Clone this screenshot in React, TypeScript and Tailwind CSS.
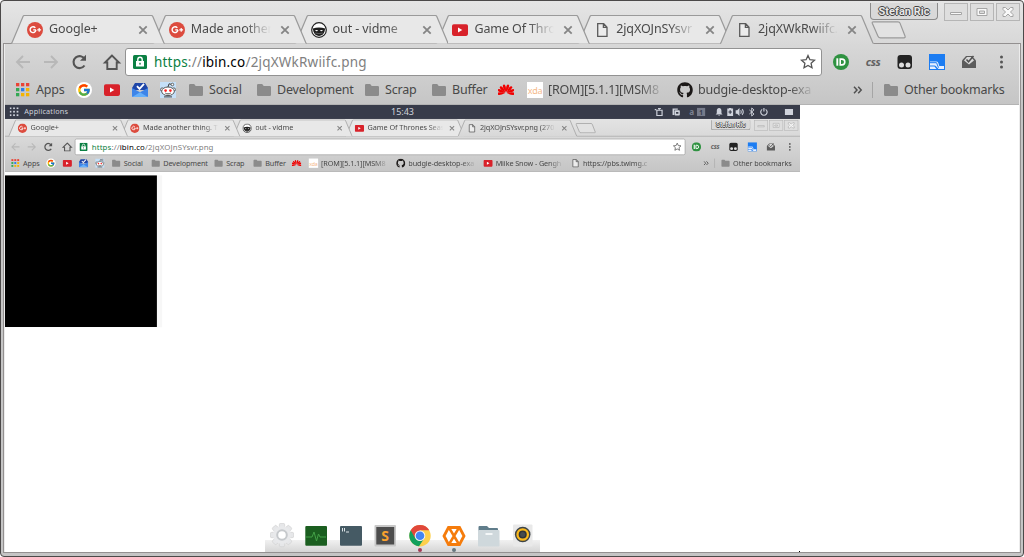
import React from 'react';
import { FaGithub } from 'react-icons/fa';
import { FcGoogle } from 'react-icons/fc';

type IconName =
  | 'gplus' | 'vidme' | 'youtube' | 'file' | 'apps' | 'google' | 'inbox'
  | 'reddit' | 'folder' | 'huawei' | 'xda' | 'github';

interface TabInfo {
  icon: IconName;
  title: string;
}

interface Bookmark {
  icon: IconName;
  label?: string;
  width: string;
}

const mainTabs: TabInfo[] = [
  { icon: 'gplus', title: 'Google+' },
  { icon: 'gplus', title: 'Made another' },
  { icon: 'vidme', title: 'out - vidme' },
  { icon: 'youtube', title: 'Game Of Thro' },
  { icon: 'file', title: '2jqXOJnSYsvr' },
  { icon: 'file', title: '2jqXWkRwiifc.' },
];

const innerTabs: TabInfo[] = [
  { icon: 'gplus', title: 'Google+' },
  { icon: 'gplus', title: 'Made another thing. Th' },
  { icon: 'vidme', title: 'out - vidme' },
  { icon: 'youtube', title: 'Game Of Thrones Seas' },
  { icon: 'file', title: '2jqXOJnSYsvr.png (270' },
];

const bookmarks: Bookmark[] = [
  { icon: 'apps', label: 'Apps', width: 'w-[61px]' },
  { icon: 'google', width: 'w-[28px]' },
  { icon: 'youtube', width: 'w-[28px]' },
  { icon: 'inbox', width: 'w-[28px]' },
  { icon: 'reddit', width: 'w-[28px]' },
  { icon: 'folder', label: 'Social', width: 'w-[68px]' },
  { icon: 'folder', label: 'Development', width: 'w-[108px]' },
  { icon: 'folder', label: 'Scrap', width: 'w-[67px]' },
  { icon: 'folder', label: 'Buffer', width: 'w-[67px]' },
  { icon: 'huawei', width: 'w-[29px]' },
  { icon: 'xda', label: '[ROM][5.1.1][MSM8', width: 'w-[150px]' },
  { icon: 'github', label: 'budgie-desktop-exa', width: 'w-[150px]' },
];

const innerBookmarks: Bookmark[] = [
  ...bookmarks,
  { icon: 'youtube', label: 'Miike Snow - Gengh', width: 'w-[150px]' },
  { icon: 'file', label: 'https://pbs.twimg.c', width: 'w-[150px]' },
];

const Icon = ({ name }: { name: IconName }) => {
  if (name === 'google') {
    return (
      <span className="flex h-4 w-4 shrink-0 items-center justify-center rounded-full bg-white">
        <FcGoogle size={14} />
      </span>
    );
  }
  if (name === 'github') return <FaGithub size={16} className="shrink-0 text-[#1b1817]" />;
  if (name === 'xda') {
    return (
      <span className="flex h-4 w-4 shrink-0 items-center justify-center bg-white text-[9px] leading-none tracking-[-0.3px] text-[#f5b98a]">
        xda
      </span>
    );
  }
  return (
    <svg width="16" height="16" viewBox="0 0 16 16" className="shrink-0">
      {name === 'gplus' && (
        <>
          <circle cx="8" cy="8" r="8" fill="#dc4b3e" />
          <path d="M9 7.900H6.200M8.300 5.900A2.900 2.900 0 1 0 8.900 7.900" fill="none" stroke="#fff" strokeWidth="1.400" />
          <path d="M12.200 6v3.800M10.300 7.900h3.800" stroke="#fff" strokeWidth="1.200" />
        </>
      )}
      {name === 'vidme' && (
        <>
          <circle cx="8" cy="8" r="7.300" fill="#fff" stroke="#222" strokeWidth="1.200" />
          <path d="M1.800 6.500q6.200-2.200 12.400 0l-.6 2.800Q12.300 13.800 8 14 3.700 13.800 2.400 9.300z" fill="#1e1e1e" />
          <path d="M4 8.300q1.700-.7 3.200.2-1.400 1.400-3.200-.2zM12 8.300q-1.700-.7-3.200.2 1.400 1.400 3.200-.2z" fill="#fff" />
          <path d="M4.200 11q3.800 1.300 7.600 0" fill="none" stroke="#777" strokeWidth=".7" />
        </>
      )}
      {name === 'youtube' && (
        <>
          <rect x="0" y="2.300" width="16" height="11.600" rx="1.800" fill="#d8222a" />
          <path d="M6 5.600v5l4.300-2.500z" fill="#fff" />
        </>
      )}
      {name === 'file' && (
        <path d="M3.700 1.700h6l3.300 3.500v9.200H3.700zM9.400 1.700v3.700H13" fill="#ececec" stroke="#5a5a5a" strokeWidth="1.300" />
      )}
      {name === 'apps' &&
        ['#ea4335', '#ea4335', '#ea4335', '#34a853', '#2b7de9', '#f4b400', '#34a853', '#f4b400', '#f4b400'].map((c, i) => (
          <rect key={i} x={1 + (i % 3) * 5} y={1 + Math.floor(i / 3) * 5} width="3.300" height="3.300" fill={c} />
        ))}
      {name === 'inbox' && (
        <>
          <path d="M0 6 3 1h10l3 5v2H0z" fill="#1f46a8" />
          <path d="m5 4.200 2.500 2.700L12 1.800" fill="none" stroke="#fff" strokeWidth="1.800" />
          <path d="M0 6l8 4.200L16 6v8.200q0 .8-.8.8H.8q-.8 0-.8-.8z" fill="#3f85e8" />
          <path d="M.3 15 8 10.200l7.700 4.800z" fill="#65b0fb" />
        </>
      )}
      {name === 'reddit' && (
        <>
          <rect width="16" height="16" fill="#c5e0f8" />
          <circle cx="2.200" cy="7.600" r="1.700" fill="#fff" stroke="#444" strokeWidth=".8" />
          <circle cx="13.800" cy="7.600" r="1.700" fill="#fff" stroke="#444" strokeWidth=".8" />
          <path d="M8 5 9 1.800l3 .7" fill="none" stroke="#444" />
          <circle cx="12.400" cy="2.500" r="1.300" fill="#fff" stroke="#444" strokeWidth=".8" />
          <ellipse cx="8" cy="9.300" rx="6.300" ry="4.300" fill="#fff" stroke="#444" strokeWidth=".9" />
          <circle cx="5.600" cy="8.600" r="1.300" fill="#f22" />
          <circle cx="10.400" cy="8.600" r="1.300" fill="#f22" />
          <path d="M5.300 11.100c1.500 1.100 3.900 1.100 5.400 0M4 14.900h8" fill="none" stroke="#444" />
        </>
      )}
      {name === 'folder' && (
        <path d="M1 3.300q0-1.300 1.200-1.300h4l1.500 2h6.100q1.200 0 1.200 1.200v7.600q0 1.200-1.200 1.200H2.200Q1 14 1 12.800z" fill="#8b8b8b" />
      )}
      {name === 'huawei' && (
        <g fill="#f00000">
          {[-95, -68, -42, -15, 15, 42, 68, 95].map((a) => (
            <path key={a} d="M8 10.800Q5.900 5.500 7 3.300q1-1.100 2 0 1.100 2.200-1 7.500z" transform={`rotate(${a} 8 11) translate(0 -.6)`} />
          ))}
        </g>
      )}
    </svg>
  );
};

// labels fade out where they run out of room
const fadeMask = '[mask-image:linear-gradient(to_right,#000_calc(100%-26px),transparent)]';

const Tab = ({ tab, wide, active, z }: { tab: TabInfo; wide?: boolean; active?: boolean; z: number }) => {
  const w = wide ? 193 : 141.8;
  const gradientId = `tab-${wide ? 'wide' : 'normal'}`;
  const shape = `M0 28.500C1 28.500 1 27.500 1.500 26.500L12 1.500Q12.400.5 13.500.5H${w - 1.5}Q${w - 0.4} .5 ${w} 1.500L${w + 10.5} 26.500Q${w + 11} 28.500 ${w + 12} 28.500`;
  return (
    <div className={`relative h-[28px] shrink-0 ${wide ? 'w-[193px]' : 'w-[141.8px]'}`} style={{ zIndex: active ? 20 : z }}>
      <svg width={w + 12} height="30" viewBox={`0 0 ${w + 12} 30`} className="absolute left-0 top-0">
        {active && (
          <linearGradient id={gradientId} x1="0" y1="0" x2="0" y2="1">
            <stop offset="0" stopColor="#e2e2e2" />
            <stop offset="1" stopColor="#d8d8d8" />
          </linearGradient>
        )}
        <path d={active ? `${shape}V29.600H0z` : shape} fill={active ? `url(#${gradientId})` : '#e8e8e8'} />
        <path d={shape} fill="none" stroke="#9a9a9a" strokeWidth="1.200" />
      </svg>
      <div className="relative flex h-[29px] items-center pl-4">
        <Icon name={tab.icon} />
        <span
          className={`ml-[6px] block overflow-hidden whitespace-nowrap text-[12.5px] tracking-[-0.1px] text-[#4a4a4a] ${wide ? 'w-[130px]' : 'w-[80px]'} ${fadeMask}`}
        >
          {tab.title}
        </span>
        <svg width="10" height="10" viewBox="0 0 10 10" className={`shrink-0 ${wide ? 'ml-[10px]' : 'ml-[9px]'}`}>
          <path d="m1.300 1.300 7.400 7.400M8.700 1.300 1.300 8.700" stroke="#858585" strokeWidth="1.800" />
        </svg>
      </div>
    </div>
  );
};

const controlPaths = [
  'M6.500 9.500h11v2h-11z',
  'M7 5.500h10v7H7zM9.500 8h5v2.500h-5z',
  'M7 4.500h2.500L12 7l2.500-2.500H17v2L14.500 9l2.500 2.500v2h-2.500L12 11l-2.500 2.500H7v-2L9.500 9 7 6.500z',
];

const WindowControls = () => (
  <div className="-mr-px flex shrink-0 gap-[2px] pt-[2px]">
    <div className="mr-[4px] flex h-[17px] w-[68px] items-center justify-center rounded-b-[4px] border border-t-0 border-[#8c8c8c] bg-[#d9d9d9] font-[Roboto] text-[11px] font-bold leading-none text-[#e8e8e8] [text-shadow:1px_0_#444,-1px_0_#444,0_1px_#444,0_-1px_#444]">
      Stefan Ric
    </div>
    {controlPaths.map((d) => (
      <div key={d} className="h-[18px] w-[24px] border border-[#b5b5b5] bg-[#dedede]">
        <svg width="22" height="16" viewBox="1 1 22 16">
          <path d={d} fill="#f8f8f8" stroke="#a5a5a5" fillRule="evenodd" />
        </svg>
      </div>
    ))}
  </div>
);

const TabStrip = ({ tabs, wide }: { tabs: TabInfo[]; wide?: boolean }) => (
  <div className={`flex ${wide ? 'h-[29px] pr-[4px]' : 'h-[42px]'}`}>
    <div className="flex min-w-0 flex-1 items-end pl-[6px]">
      {tabs.map((tab, i) => (
        <Tab key={tab.title} tab={tab} wide={wide} active={i === tabs.length - 1} z={10 - i} />
      ))}
      <svg width="36" height="18" viewBox="0 0 36 18" className="mb-[4px] ml-[9px] shrink-0">
        <path d="M2.500.8H27q1.500 0 2 1.300L34 15q.6 1.800-1 1.800H9.500q-1.800 0-2.500-1.600L1.300 2.200Q.8.8 2.500.8z" fill="#e2e2e2" stroke="#9a9a9a" strokeWidth="1.200" />
      </svg>
    </div>
    <WindowControls />
  </div>
);

const Toolbar = ({ path }: { path: string }) => (
  <div className="flex h-[28px] items-center pl-[10px]">
    <svg width="110" height="16" viewBox="0 0 110 16" fill="none" strokeWidth="1.900" className="shrink-0">
      <path d="M15 8H2M8 2 2 8l6 6M29 8h13M36 2l6 6-6 6" stroke="#b8b8b8" />
      <path d="M69.500 11.500a6 6 0 1 1 .3-6.300" stroke="#545454" strokeWidth="2.100" />
      <path d="M71 .8v6h-6z" fill="#545454" />
      <path d="M97 1.500 90 8.500h2.300V15h9.400V8.500h2.300z" stroke="#545454" />
    </svg>
    <div className="flex h-[28px] flex-1 items-center rounded-[3px] border border-[#929292] bg-white pl-[7px] pr-[5px]">
      <svg width="14" height="14" viewBox="0 0 14 14" className="shrink-0">
        <rect width="14" height="14" rx="1.500" fill="#0b8043" />
        <rect x="3" y="6" width="8" height="5.500" fill="#fff" />
        <path d="M4.800 6V4.500a2.200 2.200 0 0 1 4.400 0V6" fill="none" stroke="#fff" strokeWidth="1.400" />
        <rect x="6.300" y="7.800" width="1.400" height="1.800" fill="#0b8043" />
      </svg>
      <span className="ml-[7px] flex-1 whitespace-nowrap text-[13.5px] tracking-[0.2px] text-[#808080]">
        <span className="text-[#0b8043]">https</span>://<span className="text-black">ibin.co</span>{path}
      </span>
      <svg width="16" height="16" viewBox="0 0 16 16">
        <path d="m8 1.500 1.900 4.200 4.600.5-3.400 3.100.9 4.500-4-2.300-4 2.300.9-4.500L1.500 6.200l4.600-.5z" fill="none" stroke="#555" strokeWidth="1.300" />
      </svg>
    </div>
    <div className="flex w-[197px] shrink-0 items-center gap-[16px] pl-[11px]">
      <svg width="16" height="16" viewBox="0 0 16 16">
        <circle cx="8" cy="8" r="8" fill="#2f9241" />
        <path d="M4.300 4.300v7.400" stroke="#fff" strokeWidth="1.900" />
        <path d="M7.200 5.100h1.700a2.900 2.900 0 0 1 0 5.800H7.200z" fill="none" stroke="#fff" strokeWidth="1.600" />
      </svg>
      <span className="w-[16px] -translate-y-px text-center text-[11px] font-bold italic leading-none tracking-[-0.4px] text-[#626262]">css</span>
      <svg width="16" height="16" viewBox="0 0 16 16">
        <rect x=".5" y="1" width="14.500" height="14" rx="3" fill="#232323" />
        <circle cx="4.500" cy="11" r="2.500" fill="#ddd" />
        <circle cx="11" cy="11" r="2.500" fill="#ddd" />
      </svg>
      <svg width="16" height="16" viewBox="0 0 16 16">
        <rect width="16" height="16" fill="#1b7cf2" />
        <path d="M1 7.500h6.500q1.500 0 2 2l.8 2.500H15v3H9.500L7.200 12.500Q6.700 11.500 5.500 11.500H1z" fill="#e6efff" />
        <path d="M1 8.700h6.500l2 5" fill="none" stroke="#1b7cf2" strokeWidth="1" />
        <path d="M1 12.500h4.500L7.500 15H1z" fill="#e6efff" />
      </svg>
      <svg width="16" height="16" viewBox="0 0 16 16">
        <path d="M1 6.500 5 2h6l4 4.500V14H1z" fill="#5c5c5c" />
        <path d="m3 6.500 5 4 5-4L10 3H6z" fill="#d8d8d8" />
        <path d="m5.500 5.500 2 2.300L12.500 2" fill="none" stroke="#505050" strokeWidth="1.500" />
      </svg>
      <svg width="16" height="16" viewBox="0 0 16 16" fill="#555">
        <circle cx="8.500" cy="3" r="1.500" />
        <circle cx="8.500" cy="8" r="1.500" />
        <circle cx="8.500" cy="13" r="1.500" />
      </svg>
    </div>
  </div>
);

const BookmarksBar = ({ items }: { items: Bookmark[] }) => (
  <div className="flex h-[28px] items-center pl-[10px] text-[12.5px] tracking-[-0.2px] text-[#484848]">
    {items.map((b, i) => (
      <div key={i} className={`flex shrink-0 items-center ${b.width}`}>
        <Icon name={b.icon} />
        {b.label && (
          <span className={`ml-[5px] block whitespace-nowrap ${b.width === 'w-[150px]' ? `w-[117px] overflow-hidden ${fadeMask}` : ''}`}>
            {b.label}
          </span>
        )}
      </div>
    ))}
    <div className="ml-auto flex w-[166px] shrink-0 items-center">
      <svg width="10" height="8" viewBox="0 0 10 8">
        <path d="m1 .8 3 3.200-3 3.200M5.200.8l3 3.200-3 3.200" fill="none" stroke="#505050" strokeWidth="1.500" />
      </svg>
      <span className="ml-[9px] mr-[10px] h-[16px] w-px bg-[#a5a5a5]" />
      <Icon name="folder" />
      <span className="ml-[5px] whitespace-nowrap">Other bookmarks</span>
    </div>
  </div>
);

const TopPanel = () => (
  <div className="relative flex h-[24px] items-center bg-[#383c4a] pl-[8px] pr-[11px] text-[#cfd3dc]">
    <svg width="16" height="16" viewBox="0 0 16 16" fill="#cfd3dc">
      {[0, 1, 2, 3, 4, 5, 6, 7, 8].map((i) => (
        <rect key={i} x={(i % 3) * 6} y={Math.floor(i / 3) * 6} width="3" height="3" />
      ))}
    </svg>
    <span className="ml-[9px] text-[12.5px] tracking-[0.3px]">Applications</span>
    <span className="absolute inset-x-0 text-center text-[15.5px] leading-none">15:43</span>
    <div className="ml-auto flex items-center text-[14px] leading-none">
      <svg width="16" height="16" viewBox="0 0 16 16" fill="none" stroke="currentColor" strokeWidth="2">
        <path d="M4 5h9v9H4zM0 4h3M8 5V1M6 2h5" />
      </svg>
      <svg width="16" height="16" viewBox="0 0 16 16" className="ml-[13px]">
        <path d="M2 2h9v2H5v9H2z" fill="currentColor" />
        <rect x="5.500" y="5" width="9" height="9" rx="1.500" fill="currentColor" />
        <path d="M8 8h4v3H8z" fill="#383c4a" />
      </svg>
      <span className="ml-[11px] w-[16px] text-center font-bold text-[#7b8090]">a</span>
      <span className="ml-px flex h-[14px] w-[14px] items-center justify-center bg-[#767b8a] text-[11px] font-bold text-[#383c4a]">1</span>
      <svg width="16" height="16" viewBox="0 0 16 16" fill="currentColor" className="ml-[16px]">
        <path d="M8 1c3 0 4 2.500 4 5v4l2 2.500H2L4 10V6c0-2.500 1-5 4-5zM6 13.500h4L8 15z" />
      </svg>
      <svg width="16" height="16" viewBox="0 0 16 16" className="ml-[3px]">
        <path d="M6 1h4v1h3v13H3V2h3z" fill="currentColor" />
        <path d="M8 5v6M5 8h6" stroke="#383c4a" strokeWidth="2" />
      </svg>
      <svg width="16" height="16" viewBox="0 0 16 16" className="ml-px">
        <path d="M0 5h3l4-4v14l-4-4H0z" fill="currentColor" />
        <path d="M9 5q2 3 0 6M11.500 3q4 5 0 10" fill="none" stroke="currentColor" strokeWidth="1.800" />
      </svg>
      <svg width="16" height="16" viewBox="0 0 16 16" fill="none" stroke="currentColor" strokeWidth="1.600" className="ml-[4px]">
        <path d="m4 4.500 8 7-4 3.500V1l4 3.500-8 7" />
      </svg>
      <svg width="16" height="16" viewBox="0 0 16 16" fill="none" stroke="currentColor" strokeWidth="2" className="ml-[5px]">
        <path d="M5 3.500a5.500 5.500 0 1 0 6 0M8 1v6" />
      </svg>
      <svg width="16" height="16" viewBox="0 0 16 16" fill="currentColor" className="ml-[27px]">
        <path d="M1 3h14v10H1z" />
      </svg>
    </div>
  </div>
);

const dockIcons = [
  <>
    {[0, 45, 90, 135].map((a) => (
      <rect key={a} x="9.300" y="0.300" width="5.400" height="23.400" rx="1.500" fill="#e6e7e9" stroke="#ccc" strokeWidth=".6" transform={`rotate(${a} 12 12)`} />
    ))}
    <circle cx="12" cy="12" r="9" fill="#e8e9eb" />
    <circle cx="12" cy="12" r="4.800" fill="#fff" stroke="#c6c9cc" strokeWidth="2" />
  </>,
  <>
    <rect x="1.300" y="3" width="21.700" height="19.700" rx="1" fill="#1b5e20" />
    <path d="M2 14h6l2-5 2.500 9 2-7 1.500 3h6" fill="none" stroke="#43a047" strokeWidth="1" />
  </>,
  <>
    <rect x="1" y="3" width="22" height="19.700" rx="1" fill="#455a64" />
    <path d="M3.500 5v3.500M5.500 5v3.500M7 9h3" stroke="#dde4e7" strokeWidth="1" />
  </>,
  <>
    <rect x="1.500" y="2" width="21.500" height="21.500" rx="1" fill="#c8c8c8" />
    <rect x="3.300" y="4" width="17.900" height="17.500" fill="#4d4d4d" />
    <text x="12.200" y="18" textAnchor="middle" fontSize="14" fontWeight="bold" fill="#f9a12e">S</text>
  </>,
  <>
    <circle cx="12" cy="12.700" r="10.700" fill="#fdd04d" />
    <path d="M2.700 7.350A10.700 10.700 0 0 0 11 23.350L16.500 15 12 12.700z" fill="#12a05c" />
    <path d="M2.700 7.350A10.700 10.700 0 0 1 21.300 7.350H12L7 15z" fill="#e0473b" />
    <circle cx="12" cy="12.700" r="5.300" fill="#f4f4f4" />
    <circle cx="12" cy="12.700" r="4.300" fill="#4285f4" />
  </>,
  <>
    <path d="M6.500 4.500h11L22 13l-4.500 8.500h-11L2 13z" fill="#fff" stroke="#f57c0c" strokeWidth="2.800" />
    <path d="m7.500 5.500 9 15M16.500 5.500l-9 15" stroke="#f57c0c" strokeWidth="2.500" />
  </>,
  <>
    <path d="M1.500 4q0-1 1-1H10l2 2h8q1 0 1 1v6H1.500z" fill="#607d8b" />
    <rect x="1" y="7" width="21.500" height="16.500" rx="1" fill="#cfd8dc" />
    <path d="M8.500 10h7v2h-7z" fill="#f4f7f8" />
  </>,
  <>
    <rect x="2" y="1.500" width="19.500" height="22" rx="1" fill="#e9e9e9" />
    <circle cx="11.700" cy="11.500" r="7.800" fill="#3e4447" />
    <circle cx="11.700" cy="11.500" r="5.200" fill="#2f3437" stroke="#fbb91c" strokeWidth="2.300" />
    <circle cx="11.700" cy="11.500" r="2.500" fill="#454b4e" />
  </>,
];

const Dock = () => (
  <div className="flex h-[30px] w-[275px] items-start justify-between bg-[linear-gradient(to_bottom,transparent_18px,#f1f1f1_18px,#d5d5d5)] px-[5px] pt-px">
    {dockIcons.map((icon, i) => (
      <div key={i} className="flex flex-col items-center">
        <svg width="24" height="25" viewBox="0 0 24 25">{icon}</svg>
        {(i === 4 || i === 5) && <span className={`h-[4px] w-[4px] rounded-full blur-[0.5px] ${i === 4 ? 'bg-[#a33a55]' : 'bg-[#66777f]'}`} />}
      </div>
    ))}
  </div>
);

// desktop capture opened as the page content
const DesktopCapture = () => (
  <div className="relative h-[447px] w-[795px] overflow-hidden bg-white">
    <div className="w-[1366px] origin-top-left scale-[0.582]">
      <TopPanel />
      <div className="bg-[linear-gradient(#e3e3e3,#c5c5c5)]">
        <TabStrip tabs={innerTabs} wide />
        <div className="border-b border-t border-b-[#b0b0b0] border-t-[#9a9a9a] pt-[4px]">
          <Toolbar path="/2jqXOJnSYsvr.png" />
          <BookmarksBar items={innerBookmarks} />
        </div>
      </div>
      <div className="mt-[6px] flex h-[261px] w-[270px] bg-[#f7f7f7]">
        <div className="h-full w-[261px] bg-black" />
      </div>
    </div>
    <div className="absolute inset-x-0 bottom-0 flex justify-center">
      <Dock />
    </div>
    <span className="absolute bottom-0 right-0 h-px w-px bg-black" />
  </div>
);

export default function App() {
  return (
    <div className="h-[557px] w-[1024px] overflow-hidden bg-white font-['Noto_Sans',sans-serif]">
      <div className="h-[557px] w-[1024px] rounded-[4px] border border-[#4b4949] bg-[#c8c8c8] bg-[linear-gradient(#e5e5e5,#c5c5c5_104px)] px-[2px]">
        <div className="px-[2px]">
          <TabStrip tabs={mainTabs} />
        </div>
        <div className="h-[510px] border border-[#939090]">
          <div className="h-full border-x border-[#ececec]">
            <div className="h-[61px] border-b border-[#b3b3b3] pt-[4px]">
              <Toolbar path="/2jqXWkRwiifc.png" />
              <BookmarksBar items={bookmarks} />
            </div>
            <div className="h-[447px] bg-white">
              <DesktopCapture />
            </div>
          </div>
        </div>
      </div>
    </div>
  );
}
